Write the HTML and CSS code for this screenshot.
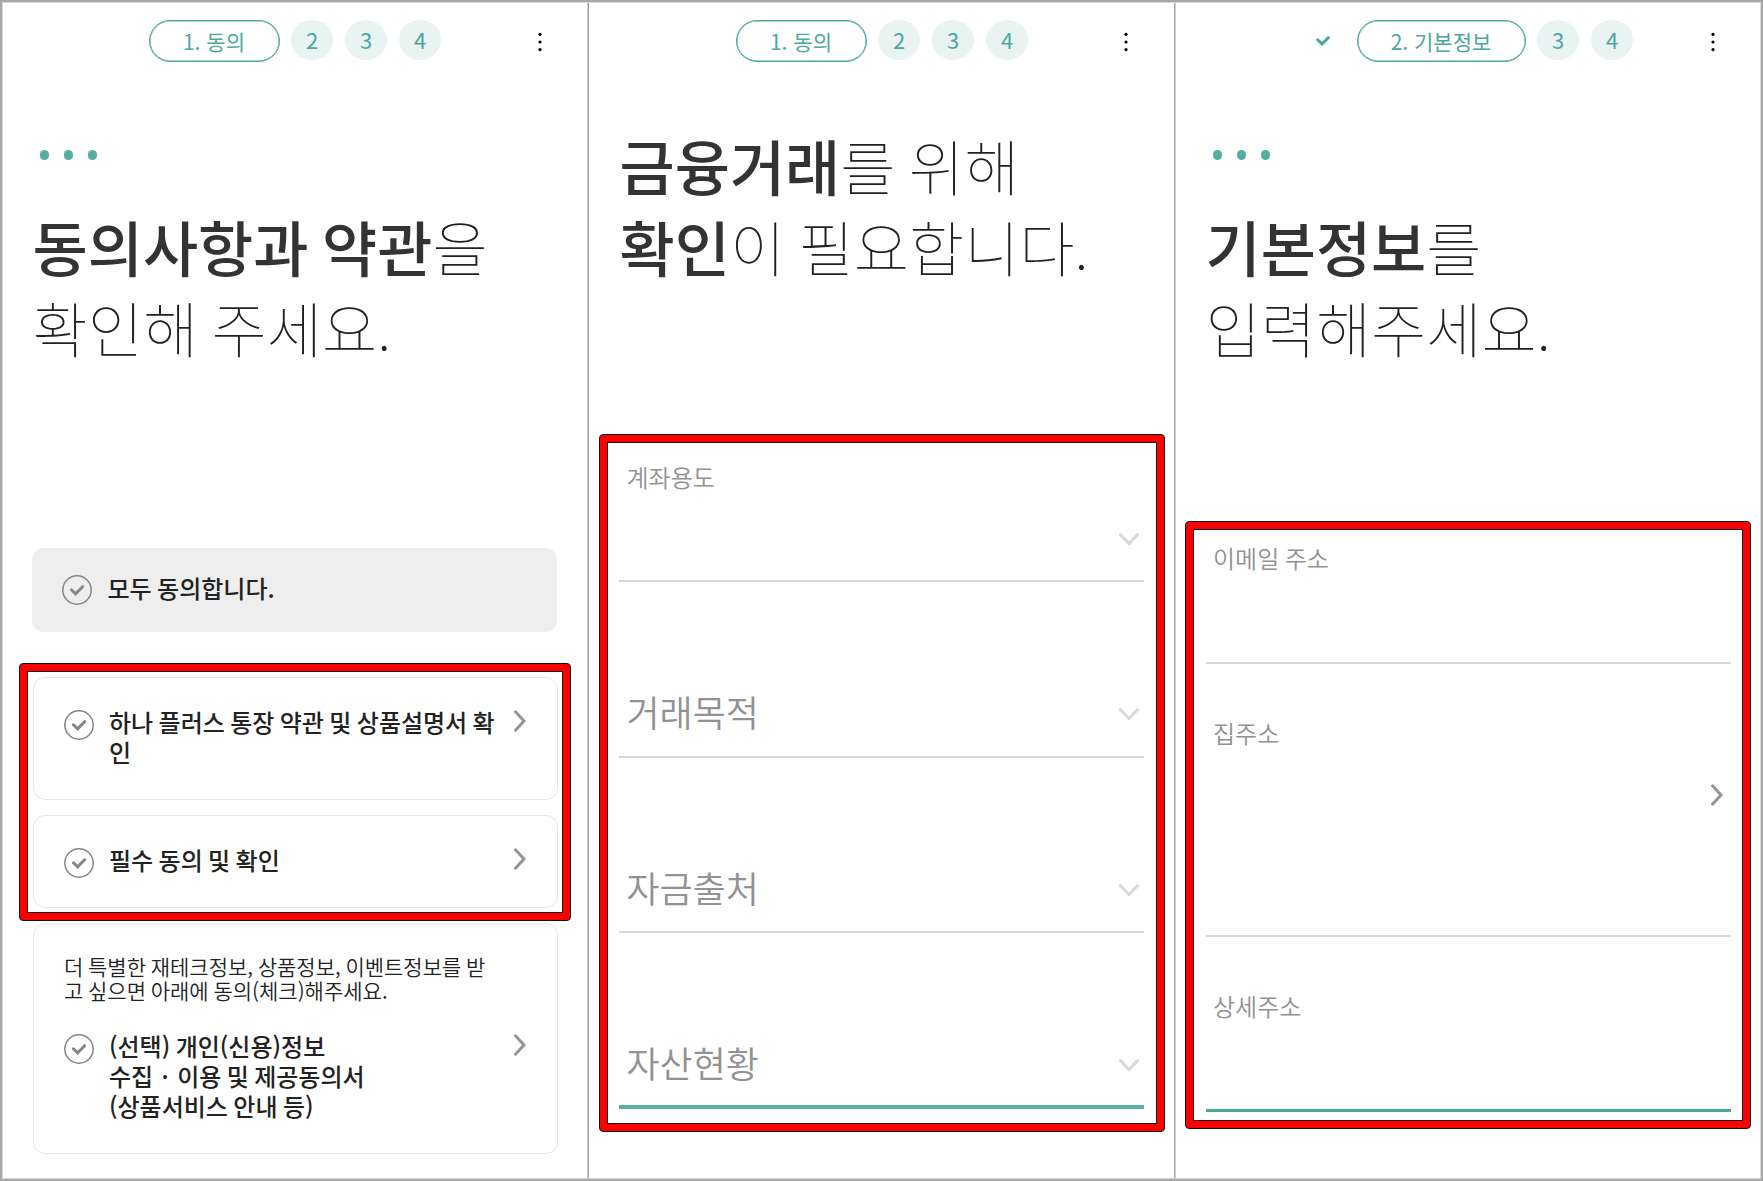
FILE: index.html
```html
<!DOCTYPE html>
<html lang="ko">
<head>
<meta charset="utf-8">
<title>계좌 개설</title>
<link rel="stylesheet" href="styles.css">
</head>
<body>
<svg class="defs" width="0" height="0">
  <symbol id="check" viewBox="0 0 30 30">
    <circle cx="15" cy="15" r="14.2" fill="none" stroke="#868686" stroke-width="1.5"/>
    <path d="M9.4 14.8l4.2 4.1 7-7.2" fill="none" stroke="#868686" stroke-width="3" stroke-linecap="round"/>
  </symbol>
  <symbol id="next" viewBox="0 0 12 22">
    <path d="M1.5 1.8L10 11 1.5 20.2" fill="none" stroke="#959595" stroke-width="3" stroke-linecap="round"/>
  </symbol>
  <symbol id="down" viewBox="0 0 20 13">
    <path d="M1.5 1.6L10 10.6 18.5 1.6" fill="none" stroke="#dadada" stroke-width="3" stroke-linecap="round"/>
  </symbol>
  <symbol id="more" viewBox="0 0 4 20">
    <circle cx="2" cy="2.3" r="1.6"/><circle cx="2" cy="10" r="1.6"/><circle cx="2" cy="17.6" r="1.6"/>
  </symbol>
</svg>
<main class="screens">
  <section class="panel">
    <header class="steps">
      <span class="pill">1. 동의</span><span class="step">2</span><span class="step">3</span><span class="step">4</span>
      <svg class="more"><use href="#more"/></svg>
    </header>
    <div class="dots"><i></i><i></i><i></i></div>
    <h1 class="title"><b>동의사항과 약관</b>을<br>확인해 주세요.</h1>
    <div class="consents">
      <div class="all"><svg class="check"><use href="#check"/></svg><span>모두 동의합니다.</span></div>
      <div class="marked">
        <div class="card tall"><svg class="check"><use href="#check"/></svg><span>하나 플러스 통장 약관 및 상품설명서 확<br>인</span><svg class="next"><use href="#next"/></svg></div>
        <div class="card"><svg class="check"><use href="#check"/></svg><span>필수 동의 및 확인</span><svg class="next"><use href="#next"/></svg></div>
      </div>
      <div class="optional">
        <p>더 특별한 재테크정보, 상품정보, 이벤트정보를 받<br>고 싶으면 아래에 동의(체크)해주세요.</p>
        <div class="row"><svg class="check"><use href="#check"/></svg><span>(선택) 개인(신용)정보<br>수집 <i class="mid">·</i> 이용 및 제공동의서<br>(상품서비스 안내 등)</span><svg class="next"><use href="#next"/></svg></div>
      </div>
    </div>
  </section>

  <section class="panel second">
    <header class="steps">
      <span class="pill">1. 동의</span><span class="step">2</span><span class="step">3</span><span class="step">4</span>
      <svg class="more"><use href="#more"/></svg>
    </header>
    <h1 class="title high"><b>금융거래</b>를 위해<br><b>확인</b>이 필요합니다.</h1>
    <div class="form selects">
      <div class="field small first"><label>계좌용도</label><svg class="down"><use href="#down"/></svg></div>
      <div class="field"><label>거래목적</label><svg class="down"><use href="#down"/></svg></div>
      <div class="field"><label>자금출처</label><svg class="down"><use href="#down"/></svg></div>
      <div class="field active"><label>자산현황</label><svg class="down"><use href="#down"/></svg></div>
    </div>
  </section>

  <section class="panel third">
    <header class="steps done">
      <svg class="tick" viewBox="0 0 14 10"><path d="M1.7 3.8l4.2 4.2L12.4 1.7" fill="none" stroke="#4aa99b" stroke-width="3" stroke-linecap="round"/></svg>
      <span class="pill wide">2. 기본정보</span><span class="step">3</span><span class="step">4</span>
      <svg class="more"><use href="#more"/></svg>
    </header>
    <div class="dots"><i></i><i></i><i></i></div>
    <h1 class="title"><b>기본정보</b>를<br>입력해주세요.</h1>
    <div class="form inputs">
      <div class="field small mail"><label>이메일 주소</label></div>
      <div class="field small home"><label>집주소</label><svg class="next"><use href="#next"/></svg></div>
      <div class="field small detail active"><label>상세주소</label></div>
    </div>
  </section>
</main>
</body>
</html>
```

FILE: styles.css
```css
* { box-sizing: border-box; word-spacing: -0.055em; }
body {
  margin: 0;
  background: #fff;
  color: #222;
  font-family: "Noto Sans CJK KR", "Noto Sans", sans-serif;
}
.defs { display: block; position: absolute; }
svg { display: block; flex: none; }

.screens {
  display: grid;
  grid-template-columns: 585px 586px 588px;
  width: 1763px;
  height: 1181px;
  overflow: hidden;
  padding: 1px 0;
  border: 2px solid #a8a8a8;
  box-shadow: inset 0 0 0 1px #d8d8d8;
}
/* two-tone hairlines between the screens */
.second {
  padding-left: 2px;
  background: linear-gradient(90deg, #cdcdcd 1px, #9e9e9e 1px 2px, transparent 2px);
}
.third {
  padding-left: 2px;
  background: linear-gradient(90deg, transparent 1px, #a4a4a4 1px 2px, #d0d0d0 2px 3px, transparent 3px);
}

/* step indicator */
.steps {
  display: flex;
  align-items: flex-start;
  height: 60px;
  padding: 17px 0 0 146.5px;
}
.steps.done { padding-left: 140.5px; }
.pill {
  width: 131px;
  height: 42px;
  margin-right: 11.5px;
  border: 1px solid #4aa99b;
  border-radius: 21px;
  box-shadow: inset 0 0 0 .5px #4aa99b;
  color: #4aa99b;
  font-size: 21px;
  line-height: 40px;
  text-align: center;
  word-spacing: 0;
}
.pill.wide { width: 169px; margin-left: 27px; }
.step {
  width: 42px;
  height: 40px;
  margin-right: 12px;
  border-radius: 50%;
  background: #e9f3f2;
  color: #4aa99b;
  font-size: 22px;
  line-height: 38px;
  text-align: center;
}
.tick { width: 14px; height: 10px; margin-top: 16px; }
.more { width: 4px; height: 20px; margin: 12px 45.5px 0 auto; }
.third .more { margin-right: 46.5px; }

.dots { display: flex; gap: 14.5px; height: 10px; margin: 87px 0 0 37.5px; }
.dots i { width: 9.5px; height: 9.5px; border-radius: 50%; background: #55ada2; }

.title {
  margin: 45px 0 0 30.5px;
  color: #222;
  font-size: 60px;
  font-weight: 100;
  line-height: 81px;
  white-space: nowrap;
}
.title.high { margin-top: 61px; }
.title b { color: #333; font-weight: 500; }

/* consent list */
.consents { margin: 181px 0 0 17px; width: 552px; font-size: 24px; font-weight: 500; line-height: 30px; }
.all, .card, .row { display: flex; align-items: flex-start; }
.check { width: 30px; height: 30px; }
.all {
  width: 525px;
  height: 84px;
  margin-left: 13px;
  padding: 27px 0 0 30px;
  border-radius: 12px;
  background: #eee;
}
.all span { margin: -2px 0 0 15.5px; }
.marked, .form {
  border: 1px solid #111;
  border-radius: 4px;
  background: #fff;
  box-shadow: inset 0 0 0 7px #f00, inset 0 0 0 8px #111;
}
.marked {
  height: 258px;
  margin-top: 31px;
  padding: 13px;
}
.card, .optional {
  width: 525px;
  border: 1px solid #e6e6e6;
  border-radius: 12px;
}
.card { height: 93px; padding: 32px 31px 0 30px; }
.card.tall { height: 123px; margin-bottom: 15px; }
.card span, .row span { flex: 1; margin: -3px 0 0 15px; white-space: nowrap; }
.mid { margin: 0 3px; font-style: normal; }
.next { width: 12px; height: 22px; margin-top: 0; }
.optional { height: 231px; margin: 2px 0 0 14px; padding: 30px 31px 0 30px; }
.optional p { margin: 0 0 32px; font-size: 21px; font-weight: 350; line-height: 24px; white-space: nowrap; }

/* marked forms */
.form { width: 566px; margin-left: 10px; color: #929292; }
.selects { width: 565.5px; height: 698px; margin-top: 148px; padding: 9px 19px; }
.inputs { height: 608px; margin-top: 154px; padding: 9px 19.5px; }
.field {
  display: flex;
  justify-content: space-between;
  width: 525px;
  height: 175.5px;
  border-bottom: 2px solid #d8d8d8;
  padding: 107px 5px 0 7.5px;
  font-size: 36px;
  font-weight: 350;
  line-height: 44px;
}
.field.small { font-size: 24px; line-height: 30px; }
.field.first { height: 138px; padding-top: 18px; }
.field.first .down { margin-top: 71px; }
.field.active { border-bottom: 3px solid #4aa99b; }
.selects .active { height: 176px; border-bottom: 4px solid #5ab0a4; }
.down { width: 20px; height: 13px; margin-top: 19px; }
.field.mail { height: 133px; padding-top: 12px; }
.field.home { height: 273px; padding-top: 54px; }
.home .next { margin: 66px 3px 0 0; }
.field.detail { height: 175px; padding-top: 54px; }
```
